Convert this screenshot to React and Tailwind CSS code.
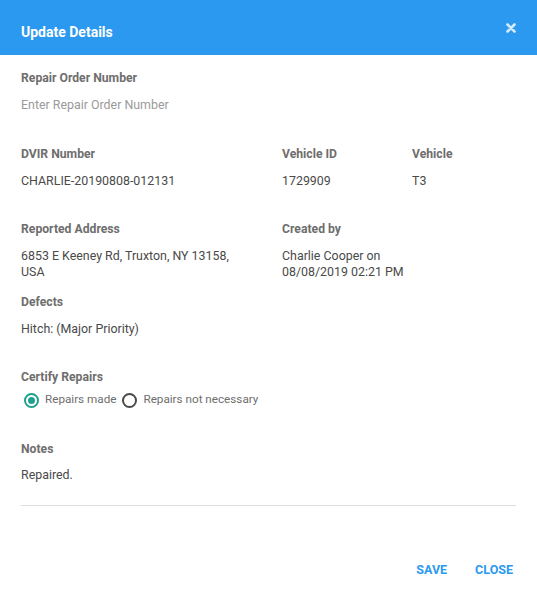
import React, { useState } from 'react';

const font = { fontFamily: 'Roboto, "Noto Sans", Arial, sans-serif' };

function Field({ label, children, className = '' }) {
    return (
        <div className={className}>
            <p className="text-[12.2px] leading-[16px] font-bold text-[#6e6e6e]">{label}</p>
            <div className="mt-[11px] min-h-[32px] text-[12.4px] leading-[16px] text-[#4a4a4a]">{children}</div>
        </div>
    );
}

function Radio({ checked, label, onClick }) {
    return (
        <button onClick={onClick} className="flex items-center gap-[6px] text-[11.7px] text-[#6e6e6e]">
            <span
                className={`flex items-center justify-center w-[15px] h-[15px] rounded-full border-2 ${checked ? 'border-[#1fa08d]' : 'border-[#4a4a4a]'}`}
            >
                {checked && <span className="w-[7px] h-[7px] rounded-full bg-[#1fa08d]" />}
            </span>
            <span>{label}</span>
        </button>
    );
}

export default function App() {
    const [certified, setCertified] = useState('made');

    return (
        <div className="w-[537px] h-[597px] bg-white flex flex-col" style={font}>
            {/* Header */}
            <div className="h-[55px] shrink-0 bg-[#2b99ef] flex items-start justify-between pl-[21px] pr-[21px]">
                <h1 className="pt-[23px] text-[14px] leading-[18px] font-bold text-white">Update Details</h1>
                <button className="pt-[23px] text-[#d6eafc]">
                    <svg width="10" height="10" viewBox="0 0 10 10">
                        <path d="M1.5 1.5 L8.5 8.5 M8.5 1.5 L1.5 8.5" stroke="currentColor" strokeWidth="2.6" strokeLinecap="round" />
                    </svg>
                </button>
            </div>

            <div className="px-[21px] pt-[15px]">
                <Field label="Repair Order Number">
                    <span className="text-[#9a9a9a]">Enter Repair Order Number</span>
                </Field>

                <div className="flex mt-[17px]">
                    <Field label="DVIR Number" className="w-[261px]">CHARLIE-20190808-012131</Field>
                    <Field label="Vehicle ID" className="w-[130px]">1729909</Field>
                    <Field label="Vehicle">T3</Field>
                </div>

                <div className="flex mt-[16px]">
                    <Field label="Reported Address" className="w-[261px] pr-[40px]">
                        6853 E Keeney Rd, Truxton, NY 13158, USA
                    </Field>
                    <Field label="Created by" className="w-[130px]">
                        Charlie Cooper on 08/08/2019 02:21 PM
                    </Field>
                </div>

                <Field label="Defects" className="mt-[14px]">Hitch: (Major Priority)</Field>

                <div className="mt-[16px]">
                    <p className="text-[12.2px] leading-[16px] font-bold text-[#6e6e6e]">Certify Repairs</p>
                    <div className="mt-[7px] h-[16px] flex items-center gap-[6px] pl-[3px]">
                        <Radio checked={certified === 'made'} label="Repairs made" onClick={() => setCertified('made')} />
                        <Radio checked={certified === 'not'} label="Repairs not necessary" onClick={() => setCertified('not')} />
                    </div>
                </div>

                <div className="mt-[33px]">
                    <p className="text-[12.2px] leading-[16px] font-bold text-[#6e6e6e]">Notes</p>
                    <p className="mt-[10px] text-[12.4px] leading-[16px] text-[#4a4a4a]">Repaired.</p>
                </div>

                <div className="mt-[22px] border-t border-[#dddddd]" />
            </div>

            <div className="flex justify-end gap-[28px] pr-[24px] mt-[55px]">
                <button className="text-[12.5px] font-bold text-[#2b99ef] uppercase">Save</button>
                <button className="text-[12.5px] font-bold text-[#2b99ef] uppercase">Close</button>
            </div>
        </div>
    );
}
